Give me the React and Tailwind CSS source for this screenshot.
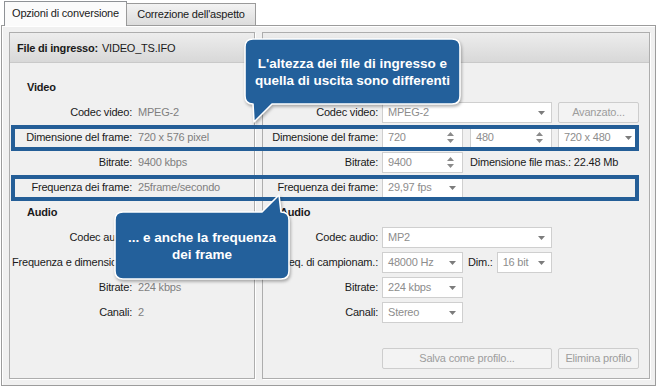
import React from "react";

function Arrow() {
  return (
    <svg width="7" height="4" viewBox="0 0 7 4" className="shrink-0">
      <path d="M0 0H7L3.5 4Z" fill="#7c7c7c" />
    </svg>
  );
}

function Spin() {
  return (
    <svg width="7" height="11" viewBox="0 0 7 11" className="shrink-0">
      <path d="M0 4L3.5 0L7 4Z M0 7L3.5 11L7 7Z" fill="#8a8a8a" />
    </svg>
  );
}

function Select({ w, v }) {
  return (
    <div className={`${w} h-[21px] bg-white border border-[#cfcfcf] flex items-center pl-[5px] pr-[6px] text-[#8d8d8d]`}>
      <span className="flex-1 whitespace-nowrap">{v}</span>
      <Arrow />
    </div>
  );
}

function SpinBox({ w, v }) {
  return (
    <div className={`${w} h-[21px] bg-white border border-[#cfcfcf] flex items-center pl-[5px] pr-[8px] text-[#8d8d8d]`}>
      <span className="flex-1 whitespace-nowrap">{v}</span>
      <Spin />
    </div>
  );
}

function Btn({ w, children }) {
  return (
    <div className={`${w} h-[21px] bg-[#f3f3f3] border border-[#cdcdcd] rounded-[2px] flex items-center justify-center text-[#9d9d9d] whitespace-nowrap`}>
      {children}
    </div>
  );
}

function LRow({ label, value }) {
  return (
    <div className="h-[25px] flex items-center">
      <div className="w-[122px] text-right whitespace-nowrap">{label}</div>
      <div className="ml-[6px] text-[#7f7f7f] whitespace-nowrap">{value}</div>
    </div>
  );
}

function RRow({ label, children }) {
  return (
    <div className="h-[25px] flex items-center">
      <div className="w-[115px] text-right whitespace-nowrap">{label}</div>
      <div className="ml-[4px] flex items-center">{children}</div>
    </div>
  );
}

function Heading({ children }) {
  return <div className="h-[25px] flex items-center pl-[17px] font-bold">{children}</div>;
}

export default function App() {
  return (
    <div className="relative w-[657px] h-[387px] bg-white overflow-hidden text-[11px] tracking-[-0.2px] text-[#1a1a1a] font-['Liberation_Sans',Arial,sans-serif]">
      {/* Tabs */}
      <div className="relative z-10 flex items-end h-[26px] mb-[-1px] pl-[4px]">
        <div className="w-[123px] h-[25px] bg-[#fbfbfb] border border-b-0 border-[#8f9296] flex items-center justify-center pb-[1px]">
          Opzioni di conversione
        </div>
        <div className="ml-[-1px] w-[130px] h-[22px] mb-[1px] bg-gradient-to-b from-[#f3f3f3] to-[#dcdcdc] border border-b-0 border-[#9a9a9a] flex items-center justify-center">
          Correzione dell'aspetto
        </div>
      </div>

      {/* Outer panel */}
      <div className="ml-[1px] w-[655px] h-[361px] bg-[#f0f0f0] border border-[#9c9c9c] shadow-[inset_1px_1px_0_#ffffff] flex gap-[7px] pl-[7px] pt-[6px]">
        {/* Left group */}
        <div className="w-[246px] h-[347px] border border-[#adadad] shadow-[1px_1px_0_#ffffff] flex flex-col">
          <div className="h-[30px] bg-gradient-to-b from-[#ededed] to-[#d8d8d8] border-b border-[#c9c9c9] flex items-center pl-[7px] pt-[1px]">
            <span className="font-bold">File di ingresso:</span>
            <span className="ml-[4px]">VIDEO_TS.IFO</span>
          </div>
          <div className="pt-[12px] flex flex-col">
            <Heading>Video</Heading>
            <LRow label="Codec video:" value="MPEG-2" />
            <LRow label="Dimensione del frame:" value="720 x 576 pixel" />
            <LRow label="Bitrate:" value="9400 kbps" />
            <LRow label="Frequenza dei frame:" value="25frame/secondo" />
            <Heading>Audio</Heading>
            <LRow label="Codec audio:" value="MP2" />
            <div className="h-[25px] flex items-center pl-[2px] whitespace-nowrap">
              Frequenza e dimensione campione:
              <span className="ml-[6px] text-[#7f7f7f]">48000 Hz</span>
            </div>
            <LRow label="Bitrate:" value="224 kbps" />
            <LRow label="Canali:" value="2" />
          </div>
        </div>

        {/* Right group */}
        <div className="w-[388px] h-[347px] border border-[#adadad] shadow-[1px_1px_0_#ffffff] flex flex-col">
          <div className="h-[30px] bg-gradient-to-b from-[#ededed] to-[#d8d8d8] border-b border-[#c9c9c9]" />
          <div className="pt-[12px] flex flex-col">
            <Heading>Video</Heading>
            <RRow label="Codec video:">
              <Select w="w-[170px]" v="MPEG-2" />
              <div className="ml-[6px]">
                <Btn w="w-[81px]">Avanzato...</Btn>
              </div>
            </RRow>
            <RRow label="Dimensione del frame:">
              <SpinBox w="w-[81px]" v="720" />
              <div className="ml-[7px]">
                <SpinBox w="w-[82px]" v="480" />
              </div>
              <div className="ml-[6px]">
                <Select w="w-[81px]" v="720 x 480" />
              </div>
            </RRow>
            <RRow label="Bitrate:">
              <SpinBox w="w-[81px]" v="9400" />
              <span className="ml-[7px] whitespace-nowrap">Dimensione file mas.: 22.48 Mb</span>
            </RRow>
            <RRow label="Frequenza dei frame:">
              <Select w="w-[81px]" v="29,97 fps" />
            </RRow>
            <Heading>Audio</Heading>
            <RRow label="Codec audio:">
              <Select w="w-[170px]" v="MP2" />
            </RRow>
            <RRow label="Freq. di campionam.:">
              <Select w="w-[81px]" v="48000 Hz" />
              <span className="ml-[5px] mr-[4px]">Dim.:</span>
              <Select w="w-[55px]" v="16 bit" />
            </RRow>
            <RRow label="Bitrate:">
              <Select w="w-[81px]" v="224 kbps" />
            </RRow>
            <RRow label="Canali:">
              <Select w="w-[81px]" v="Stereo" />
            </RRow>
            <div className="mt-[23px] flex pl-[119px]">
              <Btn w="w-[170px]">Salva come profilo...</Btn>
              <div className="ml-[6px]">
                <Btn w="w-[81px]">Elimina profilo</Btn>
              </div>
            </div>
          </div>
        </div>
      </div>

      {/* Highlight boxes */}
      <div className="absolute left-[11px] top-[125px] w-[628px] h-[26px] border-4 border-[#245e97]" />
      <div className="absolute left-[11px] top-[175px] w-[628px] h-[26px] border-4 border-[#245e97]" />

      {/* Callout 1 */}
      <svg
        className="absolute left-[243px] top-[37px] [filter:drop-shadow(1px_2px_1.5px_rgba(0,0,0,0.3))]"
        width="222"
        height="92"
        viewBox="0 0 222 92"
      >
        <path
          d="M10 2H209Q217 2 217 10V59Q217 67 209 67H29L11 85L10 67Q2 67 2 59V10Q2 2 10 2Z"
          fill="#23609b"
          stroke="#ffffff"
          strokeWidth="1.6"
          strokeLinejoin="round"
        />
      </svg>
      <div className="absolute left-[245px] top-[39px] w-[215px] h-[65px] flex flex-col items-center justify-center text-white font-bold text-[13.5px] leading-[17px] tracking-normal text-center">
        <div>L'altezza dei file di ingresso e</div>
        <div>quella di uscita sono differenti</div>
      </div>

      {/* Callout 2 */}
      <svg
        className="absolute left-[113px] top-[193px] [filter:drop-shadow(1px_2px_1.5px_rgba(0,0,0,0.3))]"
        width="182"
        height="92"
        viewBox="0 0 182 92"
      >
        <path
          d="M10 19H149L166 2L168 19Q176 19 176 27V78Q176 86 168 86H10Q2 86 2 78V27Q2 19 10 19Z"
          fill="#23609b"
          stroke="#ffffff"
          strokeWidth="1.6"
          strokeLinejoin="round"
        />
      </svg>
      <div className="absolute left-[115px] top-[212px] w-[174px] h-[67px] flex flex-col items-center justify-center text-white font-bold text-[13.5px] leading-[17px] tracking-normal text-center">
        <div>... e anche la frequenza</div>
        <div>dei frame</div>
      </div>
    </div>
  );
}
